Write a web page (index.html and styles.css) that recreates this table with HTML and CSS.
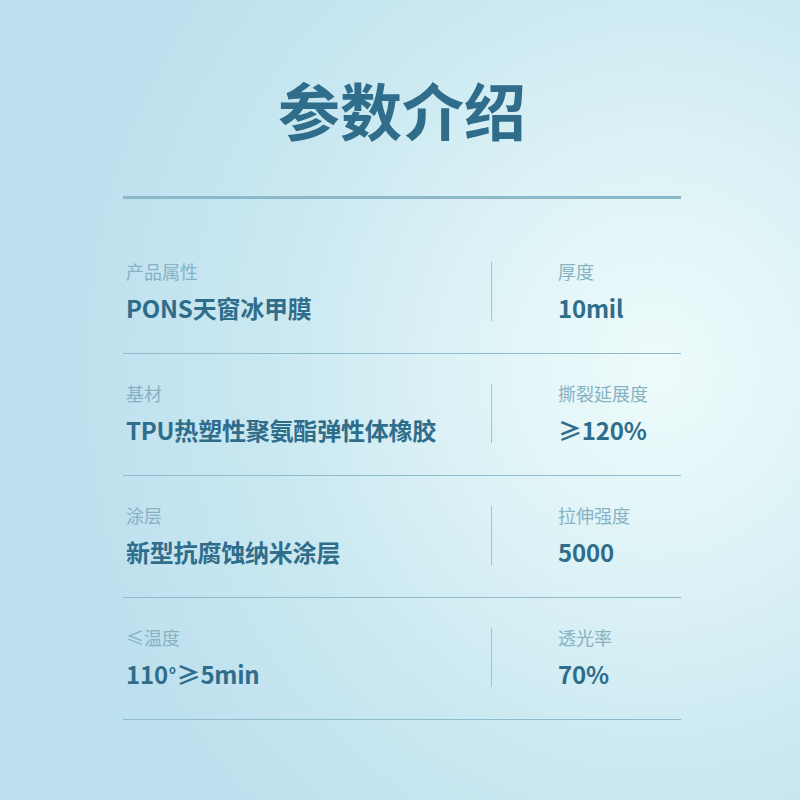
FILE: index.html
```html
<!DOCTYPE html>
<html lang="zh">
<head>
<meta charset="utf-8">
<title>参数介绍</title>
<link rel="stylesheet" href="styles.css">
</head>
<body>
<div class="page">
  <h1 class="title">参数介绍</h1>
  <div class="rule"></div>
  <div class="list">
    <div class="row">
      <div class="cell left">
        <div class="label">产品属性</div>
        <div class="value">PONS天窗冰甲膜</div>
      </div>
      <div class="cell right">
        <div class="label">厚度</div>
        <div class="value">10mil</div>
      </div>
    </div>
    <div class="row">
      <div class="cell left">
        <div class="label">基材</div>
        <div class="value">TPU热塑性聚氨酯弹性体橡胶</div>
      </div>
      <div class="cell right">
        <div class="label">撕裂延展度</div>
        <div class="value">≥120%</div>
      </div>
    </div>
    <div class="row">
      <div class="cell left">
        <div class="label">涂层</div>
        <div class="value">新型抗腐蚀纳米涂层</div>
      </div>
      <div class="cell right">
        <div class="label">拉伸强度</div>
        <div class="value">5000</div>
      </div>
    </div>
    <div class="row">
      <div class="cell left">
        <div class="label">≤温度</div>
        <div class="value">110<span class="ord">o</span>≥5min</div>
      </div>
      <div class="cell right">
        <div class="label">透光率</div>
        <div class="value">70%</div>
      </div>
    </div>
  </div>
</div>
</body>
</html>
```
FILE: styles.css
```css
html, body {
  margin: 0;
  padding: 0;
}
body {
  width: 800px;
  height: 800px;
  overflow: hidden;
  font-family: "Noto Sans CJK SC", "Noto Sans", sans-serif;
  background: radial-gradient(ellipse 75% 80% at 82% 46%, #eefbfb 0%, #dcf2f6 35%, #c9e8f1 65%, #bde0ee 100%);
}
.page {
  width: 558px;
  margin: 0 0 0 123px;
  padding-top: 78px;
}
.title {
  margin: 0 0 56px;
  font-size: 62px;
  line-height: 62px;
  font-weight: 700;
  text-align: center;
  color: #2f6d8b;
}
.rule {
  height: 3px;
  background: #8cb8c9;
}
.list {
  margin-top: 33px;
}
.row {
  display: flex;
  padding: 30px 0 32px;
  border-bottom: 1px solid #8fbccc;
}
.cell {
  display: flex;
  flex-direction: column;
}
.left {
  width: 365px;
  padding-left: 3px;
  border-right: 1px solid #9cc3d0;
}
.right {
  padding-left: 66px;
}
.label {
  font-size: 18px;
  line-height: 18px;
  color: #86b2c3;
}
.value {
  margin-top: 14px;
  font-size: 24px;
  line-height: 27px;
  font-weight: 700;
  color: #2f6d8b;
  letter-spacing: -0.2px;
}
.ord {
  font-size: 11px;
  vertical-align: 10px;
  line-height: 0;
  margin: 0 1px;
}
```
